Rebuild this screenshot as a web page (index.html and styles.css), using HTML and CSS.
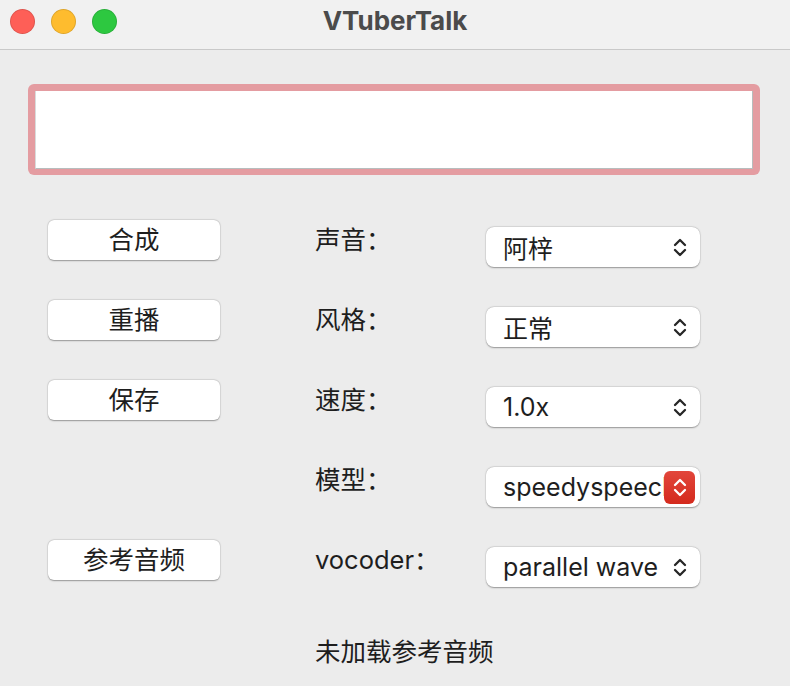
FILE: index.html
```html
<!DOCTYPE html>
<html lang="zh-CN">
<head>
  <meta charset="UTF-8">
  <meta name="viewport" content="width=device-width, initial-scale=1.0">
  <title>VTuberTalk</title>
  <link rel="stylesheet" href="styles.css">
</head>
<body>
  <div class="window">
    <!-- Barra de título -->
    <div class="titlebar">
      <div class="lights">
        <span class="light red"></span>
        <span class="light yellow"></span>
        <span class="light green"></span>
      </div>
      <div class="title">VTuberTalk</div>
    </div>

    <div class="content">
      <!-- Caixa de texto -->
      <div class="text-box">
        <div class="text-input" contenteditable="true"></div>
      </div>

      <div class="form">
        <button class="push">合成</button>
        <div class="label">声音：</div>
        <div class="popup"><span class="value">阿梓</span><span class="arrows"><svg viewBox="0 0 14 21"><polyline points="2,8 7,3 12,8"/><polyline points="2,13 7,18 12,13"/></svg></span></div>

        <button class="push">重播</button>
        <div class="label">风格：</div>
        <div class="popup"><span class="value">正常</span><span class="arrows"><svg viewBox="0 0 14 21"><polyline points="2,8 7,3 12,8"/><polyline points="2,13 7,18 12,13"/></svg></span></div>

        <button class="push">保存</button>
        <div class="label">速度：</div>
        <div class="popup"><span class="value">1.0x</span><span class="arrows"><svg viewBox="0 0 14 21"><polyline points="2,8 7,3 12,8"/><polyline points="2,13 7,18 12,13"/></svg></span></div>

        <div></div>
        <div class="label">模型：</div>
        <div class="popup active"><span class="value">speedyspeech</span><span class="arrows"><svg viewBox="0 0 14 21"><polyline points="2,8 7,3 12,8"/><polyline points="2,13 7,18 12,13"/></svg></span></div>

        <button class="push">参考音频</button>
        <div class="label">vocoder：</div>
        <div class="popup"><span class="value">parallel wave</span><span class="arrows"><svg viewBox="0 0 14 21"><polyline points="2,8 7,3 12,8"/><polyline points="2,13 7,18 12,13"/></svg></span></div>
      </div>

      <div class="status">未加载参考音频</div>
    </div>
  </div>
</body>
</html>
```

FILE: styles.css
```css
body {
  margin: 0;
  background-color: #ececec;
  font-family: 'Inter', 'Noto Sans CJK SC', sans-serif;
  color: #1e1e1e;
  overflow: hidden;
}

.window {
  width: 790px;
  height: 686px;
  background-color: #ececec;
}

.titlebar {
  height: 50px;
  background-color: #f1f1f1;
  border-bottom: 1px solid #c9c9c9;
  box-sizing: border-box;
  display: flex;
  align-items: center;
  position: relative;
}

.lights {
  display: flex;
  gap: 16px;
  padding-left: 10px;
  margin-top: -6px;
}

.light {
  width: 23px;
  height: 23px;
  border-radius: 50%;
  border: 0.5px solid rgba(0, 0, 0, 0.12);
}

.light.red {
  background-color: #fe5f57;
}

.light.yellow {
  background-color: #febc2e;
}

.light.green {
  background-color: #2dc840;
}

.title {
  position: absolute;
  left: 0;
  right: 0;
  top: 5px;
  text-align: center;
  font-size: 26px;
  font-weight: 700;
  color: #4b4b4b;
  pointer-events: none;
}

.content {
  padding: 34px 30px 0 28px;
}

/* Caixa de texto com anel de foco */
.text-box {
  height: 91px;
  border-radius: 6px;
  background-color: #e49ca1;
  padding: 7px 7px 6px 7px;
  box-sizing: border-box;
}

.text-input {
  height: 100%;
  background-color: #fff;
  border-right: 1.5px solid #b7bdbd;
  border-bottom: 1.5px solid #b7bdbd;
  border-left: 1px solid #d8dcdc;
  box-sizing: border-box;
  outline: none;
}

.form {
  display: grid;
  grid-template-columns: 267px 171px 214px;
  grid-auto-rows: 80px;
  margin: 45px 0 0 20px;
  align-items: start;
}

.push {
  width: 172px;
  height: 40px;
  background-color: #fff;
  border: none;
  border-radius: 6px;
  box-shadow: 0 0.5px 1.5px rgba(0, 0, 0, 0.35), 0 0 0 0.5px rgba(0, 0, 0, 0.06);
  font-family: 'Inter', 'Noto Sans CJK SC', sans-serif;
  font-size: 25.5px;
  color: #1e1e1e;
  padding: 0;
  line-height: 38px;
}

.label {
  height: 40px;
  line-height: 40px;
  font-size: 25.5px;
}

.popup {
  margin-top: 7px;
  height: 40px;
  background-color: #fff;
  border-radius: 8px;
  box-shadow: 0 0.5px 1.5px rgba(0, 0, 0, 0.35), 0 0 0 0.5px rgba(0, 0, 0, 0.06);
  display: flex;
  align-items: center;
  overflow: hidden;
}

.popup .value {
  padding-left: 17px;
  font-size: 25px;
  white-space: nowrap;
  flex: 1;
  overflow: hidden;
  margin-right: 4px;
}

.arrows {
  width: 31px;
  height: 33px;
  margin-right: 5px;
  display: flex;
  align-items: center;
  justify-content: center;
  border-radius: 6px;
  flex-shrink: 0;
}

.arrows svg {
  width: 14px;
  height: 21px;
  fill: none;
  stroke: #262626;
  stroke-width: 2.3;
  stroke-linecap: round;
  stroke-linejoin: round;
}

.popup.active .value {
  margin-right: 0;
}

.popup.active .arrows {
  background: linear-gradient(#e2463b, #d42a1d);
}

.popup.active .arrows svg {
  stroke: #fff;
}

.status {
  margin: 11px 0 0 287px;
  font-size: 25.5px;
}
```
